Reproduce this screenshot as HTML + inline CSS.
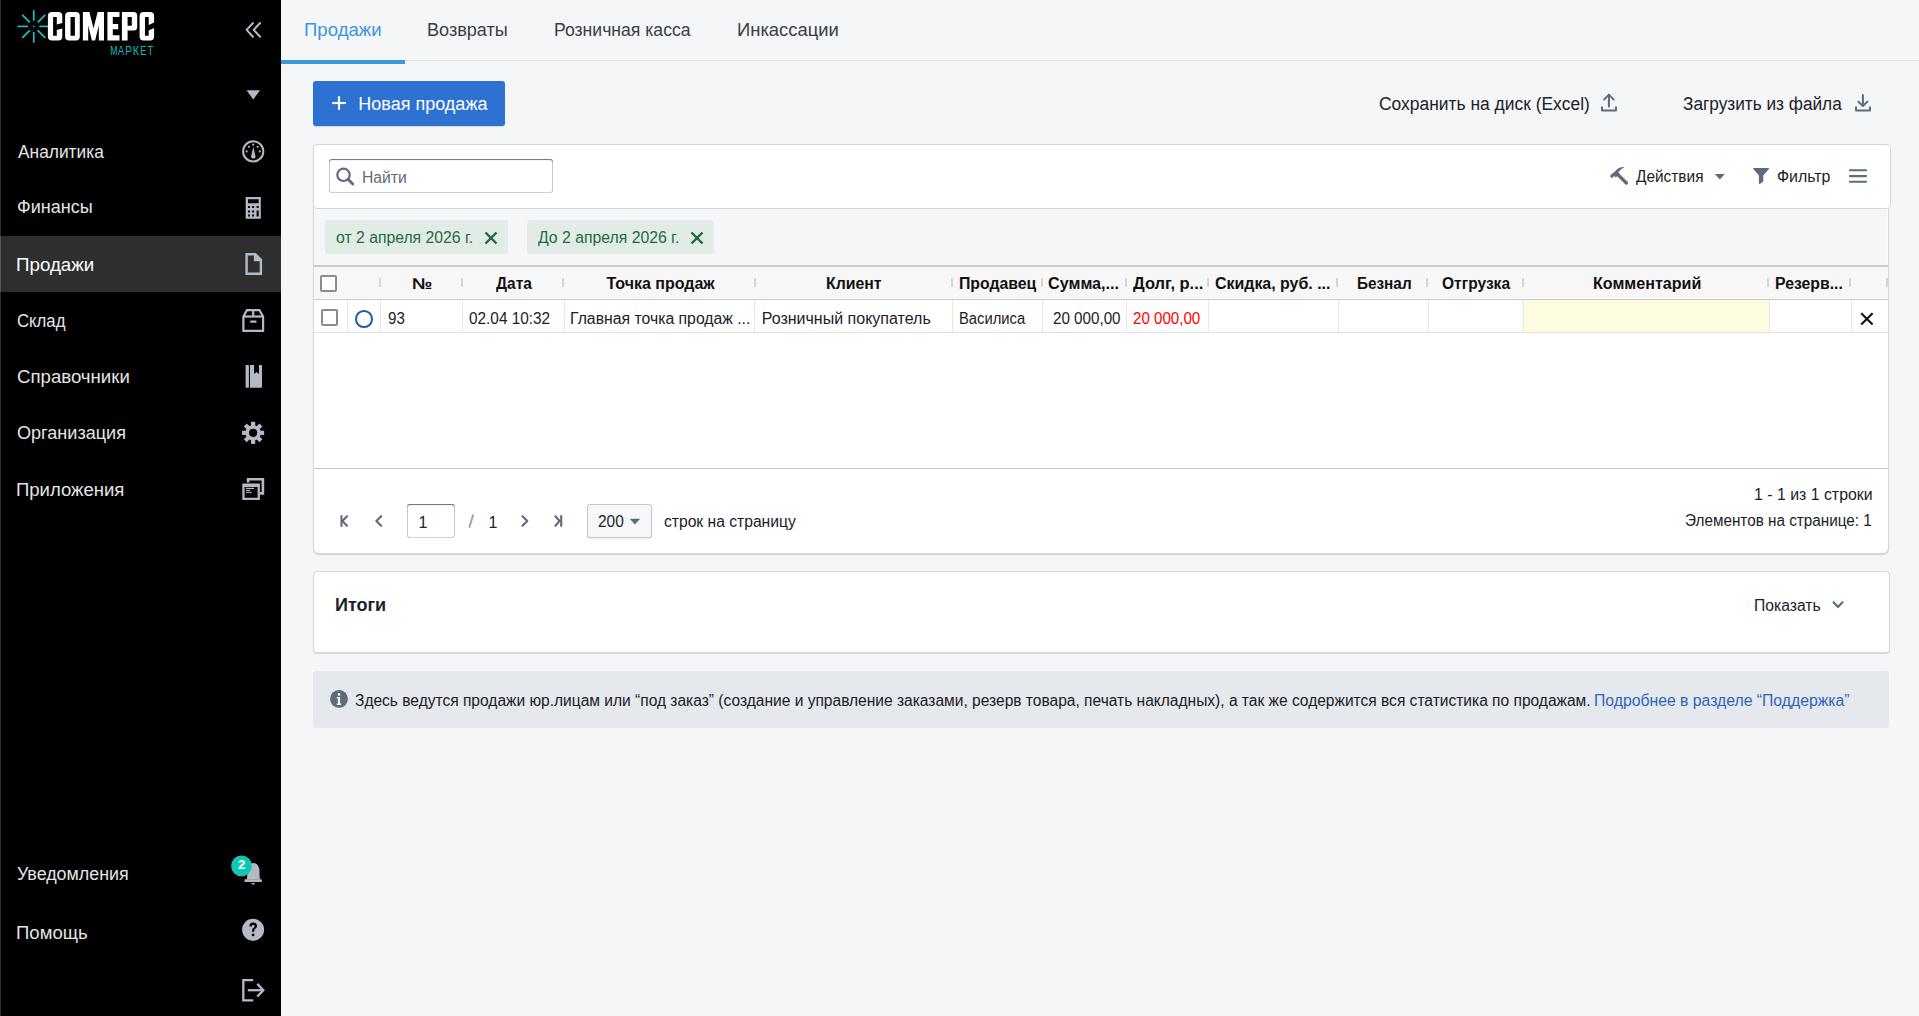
<!DOCTYPE html>
<html><head><meta charset="utf-8">
<style>
*{box-sizing:border-box;margin:0;padding:0}
html,body{width:1919px;height:1016px;overflow:hidden}
body{font-family:"Liberation Sans",sans-serif;background:#f5f6f8;color:#1c2127;position:relative}
.abs{position:absolute}
.t{position:absolute;white-space:nowrap;line-height:1}
</style></head><body>

<div class="abs" style="left:0px;top:0px;width:281px;height:1016px;background:#000"></div>
<div class="abs" style="left:0px;top:0px;width:1px;height:1016px;background:#2b2f2d"></div>
<div class="abs" style="left:1px;top:236px;width:280px;height:56px;background:#2e2e2e"></div>
<div class="abs" style="left:0px;top:236px;width:1px;height:56px;background:#555a57"></div>
<svg class="abs" style="left:0px;top:0px" width="60" height="60" viewBox="0 0 60 60"><g stroke="#1dc5c8" stroke-width="1.6" stroke-linecap="butt"><line x1="39.35" y1="26.40" x2="50.05" y2="26.40"/><line x1="37.71" y1="30.36" x2="45.28" y2="37.93"/><line x1="33.75" y1="32.00" x2="33.75" y2="42.70"/><line x1="29.79" y1="30.36" x2="22.22" y2="37.93"/><line x1="28.15" y1="26.40" x2="17.45" y2="26.40"/><line x1="29.79" y1="22.44" x2="22.22" y2="14.87"/><line x1="33.75" y1="20.80" x2="33.75" y2="10.10"/><line x1="37.71" y1="22.44" x2="45.28" y2="14.87"/></g><circle cx="33.75" cy="26.4" r="0.8" fill="#1dc5c8"/></svg>
<svg class="abs" style="left:40px;top:0px" width="130" height="64" viewBox="40 0 130 64"><g fill="#fff"><path d="M62.3,22.9 V16.1 Q62.3,12.1 58.3,12.1 H51.9 Q47.9,12.1 47.9,16.1 V36.6 Q47.9,40.6 51.9,40.6 H58.3 Q62.3,40.6 62.3,36.6 V28.4 L56.8,30.0 V35.8 H53.1 V16.9 H56.8 V24.6 Z"/><path fill-rule="evenodd" d="M69.1,12.1 H75.8 Q79.8,12.1 79.8,16.1 V36.6 Q79.8,40.6 75.8,40.6 H69.1 Q65.1,40.6 65.1,36.6 V16.1 Q65.1,12.1 69.1,12.1 Z M70.5,16.9 H74.9 V35.8 H70.5 Z"/><path d="M82.9,12.1 H89.4 L93.5,28.5 L97.6,12.1 H104 V40.6 H98.8 V25.4 L95.1,40.6 H91.9 L88.2,25.4 V40.6 H82.9 Z"/><path d="M107.4,12.1 H119.5 V17.1 H112.8 V24 H118.2 V29.2 H112.8 V35.3 H119.5 V40.6 H107.4 Z"/><path fill-rule="evenodd" d="M121.9,12.1 H133.7 Q137.2,12.1 137.2,15.6 V27.1 Q137.2,30.6 133.7,30.6 H127.6 V40.6 H121.9 Z M127.6,17.1 H131.8 V25.7 H127.6 Z"/><path d="M154.1,22.5 V16.1 Q154.1,12.1 150.1,12.1 H143.6 Q139.6,12.1 139.6,16.1 V36.6 Q139.6,40.6 143.6,40.6 H150.1 Q154.1,40.6 154.1,36.6 V27.9 L148.7,30.4 V35.8 H145 V17.1 H148.7 V25 Z"/></g></svg>
<svg class="abs" style="left:100px;top:40px" width="60" height="20" viewBox="100 40 60 20"><text transform="translate(110.20,55) scale(0.667,1)" font-family="Liberation Sans" font-size="13.2" fill="#15b8b9">М</text><text transform="translate(118.00,55) scale(0.695,1)" font-family="Liberation Sans" font-size="13.2" fill="#15b8b9">А</text><text transform="translate(125.29,55) scale(0.765,1)" font-family="Liberation Sans" font-size="13.2" fill="#15b8b9">Р</text><text transform="translate(132.63,55) scale(0.826,1)" font-family="Liberation Sans" font-size="13.2" fill="#15b8b9">К</text><text transform="translate(140.18,55) scale(0.681,1)" font-family="Liberation Sans" font-size="13.2" fill="#15b8b9">Е</text><text transform="translate(147.51,55) scale(0.731,1)" font-family="Liberation Sans" font-size="13.2" fill="#15b8b9">Т</text></svg>
<svg class="abs" style="left:240px;top:15px" width="30" height="30" viewBox="240 15 30 30"><g fill="none" stroke="#b3bac5" stroke-width="2" stroke-linecap="round" stroke-linejoin="round"><polyline points="253,23 246.6,29.9 253,36.8"/><polyline points="260.1,23 253.7,29.9 260.1,36.8"/></g></svg>
<svg class="abs" style="left:240px;top:85px" width="30" height="20" viewBox="240 85 30 20"><polygon points="246.5,90.2 260,90.2 253.25,99.6" fill="#b3bac5"/></svg>
<div class="t" style="left:17.50px;top:143px;font-size:18.3px;color:#e4e4e4;font-weight:400;transform:scaleX(0.9483);transform-origin:0 0;">Аналитика</div>
<div class="t" style="left:16.51px;top:198px;font-size:18.3px;color:#e4e4e4;font-weight:400;transform:scaleX(0.9856);transform-origin:0 0;">Финансы</div>
<div class="t" style="left:16.20px;top:256px;font-size:18.3px;color:#fff;font-weight:400;transform:scaleX(1.0251);transform-origin:0 0;">Продажи</div>
<div class="t" style="left:16.66px;top:312px;font-size:18.3px;color:#e4e4e4;font-weight:400;transform:scaleX(0.9149);transform-origin:0 0;">Склад</div>
<div class="t" style="left:16.57px;top:368px;font-size:18.3px;color:#e4e4e4;font-weight:400;transform:scaleX(1.0184);transform-origin:0 0;">Справочники</div>
<div class="t" style="left:16.69px;top:424px;font-size:18.3px;color:#e4e4e4;font-weight:400;transform:scaleX(0.9886);transform-origin:0 0;">Организация</div>
<div class="t" style="left:16.02px;top:481px;font-size:18.3px;color:#e4e4e4;font-weight:400;transform:scaleX(1.0134);transform-origin:0 0;">Приложения</div>
<div class="t" style="left:16.76px;top:865px;font-size:18.3px;color:#e4e4e4;font-weight:400;transform:scaleX(0.9775);transform-origin:0 0;">Уведомления</div>
<div class="t" style="left:15.82px;top:924px;font-size:18.3px;color:#e4e4e4;font-weight:400;transform:scaleX(1.0140);transform-origin:0 0;">Помощь</div>
<svg class="abs" style="left:238px;top:136px" width="30" height="30" viewBox="238 136 30 30"><circle cx="253.2" cy="151.4" r="10.1" fill="none" stroke="#b3bac5" stroke-width="2"/><g fill="#b3bac5"><circle cx="253.2" cy="144.6" r="1.05"/><circle cx="248.9" cy="146.8" r="1.05"/><circle cx="257.6" cy="146.8" r="1.05"/><circle cx="246.6" cy="151.4" r="1.05"/><circle cx="259.8" cy="151.4" r="1.05"/><path d="M253.3,146.8 L255.5,156.4 Q255.6,158.6 253.3,158.6 Q251,158.6 251.1,156.4 Z"/></g></svg>
<svg class="abs" style="left:238px;top:192px" width="30" height="32" viewBox="238 192 30 32"><path fill-rule="evenodd" fill="#b3bac5" d="M245.7,197 H260.8 V218.8 H245.7 Z M248,199.2 H258.7 V203.2 H248 Z M248,206 H250 V208 H248 Z M252.1,206 H254.1 V208 H252.1 Z M256.6,206 H258.7 V208 H256.6 Z M248,210.4 H250 V212.4 H248 Z M252.1,210.4 H254.1 V212.4 H252.1 Z M256.6,210.4 H258.7 V216.6 H256.6 Z M248,214.5 H250 V216.6 H248 Z M252.1,214.5 H254.1 V216.6 H252.1 Z"/></svg>
<svg class="abs" style="left:238px;top:248px" width="30" height="32" viewBox="238 248 30 32"><path fill-rule="evenodd" fill="#b3bac5" d="M245.4,253 H255.8 L262.1,259.3 V275 H245.4 Z M247.8,255.4 V272.6 H259.7 V261.2 H253.9 V255.4 Z"/></svg>
<svg class="abs" style="left:238px;top:304px" width="30" height="32" viewBox="238 304 30 32"><g fill="none" stroke="#b3bac5" stroke-width="2.2" stroke-linejoin="miter"><path d="M243.4,316.5 L247,310.1 H259.4 L263.1,316.5 V330.8 H243.4 Z"/><line x1="243.4" y1="316.5" x2="263.1" y2="316.5"/><line x1="253.2" y1="310.1" x2="253.2" y2="316.5"/></g><rect x="250.1" y="320.4" width="6.5" height="2.3" rx="0.8" fill="#b3bac5"/></svg>
<svg class="abs" style="left:238px;top:360px" width="30" height="32" viewBox="238 360 30 32"><g fill="#b3bac5"><rect x="245.6" y="365" width="3.3" height="22.7" rx="0.6"/><path d="M250,365 H254.1 V373.9 L256.55,372.1 L259,373.9 V365 H261.4 Q262,365 262,365.6 V387.1 Q262,387.7 261.4,387.7 H250 Z"/></g></svg>
<svg class="abs" style="left:238px;top:416px" width="30" height="32" viewBox="238 416 30 32"><g fill="#b3bac5"><rect x="251" y="421.8" width="4.2" height="5" transform="rotate(0 253.1 432.85)"/><rect x="251" y="421.8" width="4.2" height="5" transform="rotate(45 253.1 432.85)"/><rect x="251" y="421.8" width="4.2" height="5" transform="rotate(90 253.1 432.85)"/><rect x="251" y="421.8" width="4.2" height="5" transform="rotate(135 253.1 432.85)"/><rect x="251" y="421.8" width="4.2" height="5" transform="rotate(180 253.1 432.85)"/><rect x="251" y="421.8" width="4.2" height="5" transform="rotate(225 253.1 432.85)"/><rect x="251" y="421.8" width="4.2" height="5" transform="rotate(270 253.1 432.85)"/><rect x="251" y="421.8" width="4.2" height="5" transform="rotate(315 253.1 432.85)"/></g><circle cx="253.1" cy="432.85" r="5.9" fill="none" stroke="#b3bac5" stroke-width="3.6"/></svg>
<svg class="abs" style="left:238px;top:473px" width="30" height="32" viewBox="238 473 30 32"><path d="M248.1,482.5 V479.3 H262.9 V493.4 H260" fill="none" stroke="#b3bac5" stroke-width="2.6" stroke-linejoin="miter"/><path fill-rule="evenodd" fill="#b3bac5" d="M242.3,483.4 H259.9 V500.1 H242.3 Z M244.6,487 V497.8 H257.6 V487 Z"/><g fill="#b3bac5"><rect x="245.9" y="487.8" width="8.2" height="1.2"/><rect x="245.9" y="489.9" width="4.3" height="1.2"/><rect x="245.9" y="491.8" width="6" height="1.3" opacity=".8"/></g></svg>
<svg class="abs" style="left:238px;top:856px" width="30" height="34" viewBox="238 856 30 34"><g fill="#b3bac5"><path d="M246.6,879.6 C247.3,877.5 247.3,875 247.3,871.5 C247.3,866 249.8,863 253.2,863 C256.6,863 259.5,866 259.5,871.5 C259.5,875 259.5,877.5 260.3,879.6 Z"/><rect x="244.3" y="879.2" width="17.7" height="2.8" rx="1.3"/><path d="M251.2,883 H255.2 L253.2,885 Z"/></g></svg>
<svg class="abs" style="left:228px;top:852px" width="28" height="28" viewBox="228 852 28 28"><circle cx="241.5" cy="865.9" r="10.4" fill="#12c6b6"/></svg>
<div class="t" style="left:238.34px;top:859px;font-size:12.5px;color:#fff;font-weight:700;transform:scaleX(1.0500);transform-origin:0 0;">2</div>
<svg class="abs" style="left:238px;top:915px" width="30" height="30" viewBox="238 915 30 30"><circle cx="253.1" cy="929.8" r="11" fill="#b3bac5"/><path d="M249.4,926.3 Q249.4,922.6 253.2,922.6 Q257,922.6 257,926 Q257,928 255,929.1 Q254.2,929.6 254.2,931 V931.8 H252 V930.6 Q252,928.7 253.6,927.8 Q254.6,927.2 254.6,926.1 Q254.6,924.8 253.2,924.8 Q251.8,924.8 251.8,926.5 Z" fill="#000"/><circle cx="253.1" cy="934.9" r="1.35" fill="#000"/></svg>
<svg class="abs" style="left:238px;top:975px" width="32" height="31" viewBox="238 975 32 31"><g fill="none" stroke="#b3bac5" stroke-width="2.3"><path d="M253.2,980.1 H243.3 V1000.4 H253.2"/><line x1="247.8" y1="990.2" x2="263" y2="990.2"/><polyline points="257.3,983.9 263.3,990.2 257.3,996.5"/></g></svg>
<div class="abs" style="left:281px;top:60px;width:1638px;height:1px;background:#dfe2e6"></div>
<div class="abs" style="left:281px;top:60px;width:124px;height:4px;background:#3a9ad9"></div>
<div class="t" style="left:304.31px;top:21px;font-size:18.3px;color:#3a96dc;font-weight:400;transform:scaleX(1.0170);transform-origin:0 0;">Продажи</div>
<div class="t" style="left:427.05px;top:21px;font-size:18.3px;color:#383e45;font-weight:400;transform:scaleX(0.9892);transform-origin:0 0;">Возвраты</div>
<div class="t" style="left:553.69px;top:21px;font-size:18.3px;color:#383e45;font-weight:400;transform:scaleX(0.9626);transform-origin:0 0;">Розничная касса</div>
<div class="t" style="left:736.53px;top:21px;font-size:18.3px;color:#383e45;font-weight:400;transform:scaleX(1.0066);transform-origin:0 0;">Инкассации</div>
<div class="abs" style="left:313px;top:81px;width:192px;height:45px;background:#2d72d2;border-radius:3px;box-shadow:0 1px 1px rgba(17,20,24,.15)"></div>
<svg class="abs" style="left:328px;top:92px" width="22" height="22" viewBox="328 92 22 22"><g stroke="#fff" stroke-width="2.1"><line x1="339" y1="96.2" x2="339" y2="109.9"/><line x1="332.2" y1="103" x2="345.8" y2="103"/></g></svg>
<div class="t" style="left:358.36px;top:95px;font-size:18px;color:#fff;font-weight:400;">Новая продажа</div>
<div class="t" style="left:1378.93px;top:95px;font-size:18px;color:#1c2127;font-weight:400;transform:scaleX(0.9679);transform-origin:0 0;">Сохранить на диск (Excel)</div>
<svg class="abs" style="left:1595px;top:88px" width="30" height="30" viewBox="1595 88 30 30"><g fill="none" stroke="#5f6b7c" stroke-width="2" stroke-linecap="round" stroke-linejoin="round"><polyline points="1604.1,99.6 1608.9,94.6 1613.7,99.6"/><line x1="1608.9" y1="95.2" x2="1608.9" y2="106.6"/><polyline points="1602,107.2 1602,110.4 1616,110.4 1616,107.2"/></g></svg>
<div class="t" style="left:1683.30px;top:95px;font-size:18px;color:#1c2127;font-weight:400;transform:scaleX(0.9568);transform-origin:0 0;">Загрузить из файла</div>
<svg class="abs" style="left:1848px;top:88px" width="30" height="30" viewBox="1848 88 30 30"><g fill="none" stroke="#5f6b7c" stroke-width="2" stroke-linecap="round" stroke-linejoin="round"><polyline points="1858.3,101.6 1862.9,106 1867.5,101.6"/><line x1="1862.9" y1="94.9" x2="1862.9" y2="105.6"/><polyline points="1856,107.2 1856,110.4 1870,110.4 1870,107.2"/></g></svg>
<div class="abs" style="left:313px;top:144px;width:1576px;height:410px;background:#fff;border:1px solid #d5d8dc;border-radius:4px 4px 6px 6px;box-shadow:0 1px 1px rgba(17,20,24,.16)"></div>
<div class="abs" style="left:314px;top:208px;width:1573px;height:58px;background:#f5f6f8"></div>
<div class="abs" style="left:313px;top:144px;width:1578px;height:65px;background:#fff;border:1px solid #d3d6da;border-radius:4px"></div>
<div class="abs" style="left:329px;top:159px;width:224px;height:34px;background:#fff;border-radius:3px;box-shadow:inset 0 0 0 1px rgba(17,20,24,.2),inset 0 1px 1px rgba(17,20,24,.5)"></div>
<svg class="abs" style="left:333px;top:165px;" width="24" height="24" viewBox="0 0 24 24"><circle cx="10.5" cy="9.8" r="6.2" fill="none" stroke="#5f6b7c" stroke-width="2.2"/><line x1="15" y1="14.3" x2="19.8" y2="19" stroke="#5f6b7c" stroke-width="2.8" stroke-linecap="round"/></svg>
<div class="t" style="left:361.74px;top:170px;font-size:16px;color:#5f6b7c;font-weight:400;transform:scaleX(0.9820);transform-origin:0 0;">Найти</div>
<svg class="abs" style="left:1604px;top:160px" width="30" height="32" viewBox="1604 160 30 32"><g fill="#5f6b7c"><path d="M1610,176.2 L1611.8,178.3 L1614.2,176 L1615.8,177.4 L1619.6,173.6 L1618.2,172.2 L1621.5,169 Q1622.8,167.9 1624.3,167.6 L1624,167 Q1620.5,166.6 1618,168.6 L1612.4,173.8 L1611.9,173.4 Z"/></g><line x1="1617.6" y1="174.3" x2="1626.4" y2="183" stroke="#5f6b7c" stroke-width="3.3" stroke-linecap="round"/></svg>
<div class="t" style="left:1635.72px;top:169px;font-size:16px;color:#1c2127;font-weight:400;transform:scaleX(0.9629);transform-origin:0 0;">Действия</div>
<svg class="abs" style="left:1710px;top:168px" width="20" height="16" viewBox="1710 168 20 16"><polygon points="1714.8,173.9 1724.8,173.9 1719.8,179.5" fill="#5f6b7c"/></svg>
<svg class="abs" style="left:1748px;top:164px" width="26" height="24" viewBox="1748 164 26 24"><path d="M1753.6,168 H1768.6 Q1769.4,168.2 1768.9,169 L1763.3,175.6 V181.6 L1760.2,183.8 Q1758.9,184.3 1758.9,183 V175.6 L1753.3,169 Q1752.8,168.2 1753.6,168 Z" fill="#5f6b7c"/></svg>
<div class="t" style="left:1776.93px;top:169px;font-size:16px;color:#1c2127;font-weight:400;transform:scaleX(0.9935);transform-origin:0 0;">Фильтр</div>
<svg class="abs" style="left:1844px;top:164px" width="28" height="24" viewBox="1844 164 28 24"><g stroke="#5f6b7c" stroke-width="2.1" stroke-linecap="round"><line x1="1850" y1="170.3" x2="1866" y2="170.3"/><line x1="1850" y1="176.1" x2="1866" y2="176.1"/><line x1="1850" y1="181.8" x2="1866" y2="181.8"/></g></svg>
<div class="abs" style="left:325px;top:220px;width:183px;height:34px;background:#e2ebe6;border-radius:3px"></div>
<div class="t" style="left:336.37px;top:230px;font-size:16px;color:#1d6b42;font-weight:400;transform:scaleX(0.9840);transform-origin:0 0;">от 2 апреля 2026 г.</div>
<svg class="abs" style="left:482px;top:229px;" width="18" height="18" viewBox="0 0 18 18"><g stroke="#1d6b42" stroke-width="2.4"><line x1="3.5" y1="3.5" x2="14.5" y2="14.5"/><line x1="14.5" y1="3.5" x2="3.5" y2="14.5"/></g></svg>
<div class="abs" style="left:527px;top:220px;width:187px;height:34px;background:#e2ebe6;border-radius:3px"></div>
<div class="t" style="left:538.17px;top:230px;font-size:16px;color:#1d6b42;font-weight:400;transform:scaleX(0.9858);transform-origin:0 0;">До 2 апреля 2026 г.</div>
<svg class="abs" style="left:688px;top:229px;" width="18" height="18" viewBox="0 0 18 18"><g stroke="#1d6b42" stroke-width="2.4"><line x1="3.5" y1="3.5" x2="14.5" y2="14.5"/><line x1="14.5" y1="3.5" x2="3.5" y2="14.5"/></g></svg>
<div class="abs" style="left:314px;top:265px;width:1574px;height:2px;background:#c9cacc"></div>
<div class="abs" style="left:314px;top:267px;width:1574px;height:32px;background:#f7f7f7"></div>
<div class="abs" style="left:314px;top:299px;width:1574px;height:1px;background:#c8cacd"></div>
<div class="abs" style="left:379px;top:278px;width:2px;height:9px;background:#d6d6d6"></div>
<div class="abs" style="left:461px;top:278px;width:2px;height:9px;background:#d6d6d6"></div>
<div class="abs" style="left:562px;top:278px;width:2px;height:9px;background:#d6d6d6"></div>
<div class="abs" style="left:754px;top:278px;width:2px;height:9px;background:#d6d6d6"></div>
<div class="abs" style="left:951px;top:278px;width:2px;height:9px;background:#d6d6d6"></div>
<div class="abs" style="left:1041px;top:278px;width:2px;height:9px;background:#d6d6d6"></div>
<div class="abs" style="left:1125px;top:278px;width:2px;height:9px;background:#d6d6d6"></div>
<div class="abs" style="left:1207px;top:278px;width:2px;height:9px;background:#d6d6d6"></div>
<div class="abs" style="left:1336px;top:278px;width:2px;height:9px;background:#d6d6d6"></div>
<div class="abs" style="left:1426px;top:278px;width:2px;height:9px;background:#d6d6d6"></div>
<div class="abs" style="left:1522px;top:278px;width:2px;height:9px;background:#d6d6d6"></div>
<div class="abs" style="left:1767px;top:278px;width:2px;height:9px;background:#d6d6d6"></div>
<div class="abs" style="left:1849px;top:278px;width:2px;height:9px;background:#d6d6d6"></div>
<div class="abs" style="left:1886px;top:278px;width:2px;height:9px;background:#d6d6d6"></div>
<div class="abs" style="left:320px;top:275px;width:17px;height:17px;border:2px solid #8c8c8c;border-radius:2px;background:#fff"></div>
<div class="t" style="left:412.32px;top:276px;font-size:16px;color:#111;font-weight:700;transform:scaleX(1.1375);transform-origin:0 0;">№</div>
<div class="t" style="left:495.64px;top:276px;font-size:16px;color:#111;font-weight:700;transform:scaleX(0.9692);transform-origin:0 0;">Дата</div>
<div class="t" style="left:606.54px;top:276px;font-size:16px;color:#111;font-weight:700;">Точка продаж</div>
<div class="t" style="left:826.47px;top:276px;font-size:16px;color:#111;font-weight:700;transform:scaleX(0.9905);transform-origin:0 0;">Клиент</div>
<div class="t" style="left:958.67px;top:276px;font-size:16px;color:#111;font-weight:700;transform:scaleX(0.9878);transform-origin:0 0;">Продавец</div>
<div class="t" style="left:1048.05px;top:276px;font-size:16px;color:#111;font-weight:700;transform:scaleX(1.0096);transform-origin:0 0;">Сумма,...</div>
<div class="t" style="left:1132.84px;top:276px;font-size:16px;color:#111;font-weight:700;transform:scaleX(1.0280);transform-origin:0 0;">Долг, р...</div>
<div class="t" style="left:1214.66px;top:276px;font-size:16px;color:#111;font-weight:700;transform:scaleX(0.9960);transform-origin:0 0;">Скидка, руб. ...</div>
<div class="t" style="left:1356.51px;top:276px;font-size:16px;color:#111;font-weight:700;transform:scaleX(0.9566);transform-origin:0 0;">Безнал</div>
<div class="t" style="left:1441.88px;top:276px;font-size:16px;color:#111;font-weight:700;transform:scaleX(0.9709);transform-origin:0 0;">Отгрузка</div>
<div class="t" style="left:1592.70px;top:276px;font-size:16px;color:#111;font-weight:700;transform:scaleX(1.0062);transform-origin:0 0;">Комментарий</div>
<div class="t" style="left:1774.97px;top:276px;font-size:16px;color:#111;font-weight:700;transform:scaleX(0.9859);transform-origin:0 0;">Резерв...</div>
<div class="abs" style="left:314px;top:300px;width:1574px;height:32px;background:#fff"></div>
<div class="abs" style="left:1524px;top:300px;width:245px;height:32px;background:#fefcde"></div>
<div class="abs" style="left:314px;top:332px;width:1574px;height:1px;background:#dde1e6"></div>
<div class="abs" style="left:347px;top:300px;width:1px;height:32px;background:#e6e6e6"></div>
<div class="abs" style="left:380px;top:300px;width:1px;height:32px;background:#e6e6e6"></div>
<div class="abs" style="left:462px;top:300px;width:1px;height:32px;background:#e6e6e6"></div>
<div class="abs" style="left:564px;top:300px;width:1px;height:32px;background:#e6e6e6"></div>
<div class="abs" style="left:754px;top:300px;width:1px;height:32px;background:#e6e6e6"></div>
<div class="abs" style="left:952px;top:300px;width:1px;height:32px;background:#e6e6e6"></div>
<div class="abs" style="left:1042px;top:300px;width:1px;height:32px;background:#e6e6e6"></div>
<div class="abs" style="left:1126px;top:300px;width:1px;height:32px;background:#e6e6e6"></div>
<div class="abs" style="left:1208px;top:300px;width:1px;height:32px;background:#e6e6e6"></div>
<div class="abs" style="left:1338px;top:300px;width:1px;height:32px;background:#e6e6e6"></div>
<div class="abs" style="left:1428px;top:300px;width:1px;height:32px;background:#e6e6e6"></div>
<div class="abs" style="left:1523px;top:300px;width:1px;height:32px;background:#e6e6e6"></div>
<div class="abs" style="left:1769px;top:300px;width:1px;height:32px;background:#e6e6e6"></div>
<div class="abs" style="left:1851px;top:300px;width:1px;height:32px;background:#e6e6e6"></div>
<div class="abs" style="left:321px;top:309px;width:17px;height:17px;border:2px solid #8c8c8c;border-radius:2px;background:#fff"></div>
<div class="abs" style="left:355px;top:310px;width:17.5px;height:17.5px;border:2px solid #2159b5;border-radius:50%"></div>
<div class="t" style="left:387.62px;top:311px;font-size:16px;color:#1c2127;font-weight:400;transform:scaleX(0.9451);transform-origin:0 0;">93</div>
<div class="t" style="left:469.09px;top:311px;font-size:16px;color:#1c2127;font-weight:400;transform:scaleX(0.9598);transform-origin:0 0;">02.04 10:32</div>
<div class="t" style="left:570.04px;top:311px;font-size:16px;color:#1c2127;font-weight:400;transform:scaleX(0.9863);transform-origin:0 0;">Главная точка продаж ...</div>
<div class="t" style="left:761.72px;top:311px;font-size:16px;color:#1c2127;font-weight:400;">Розничный покупатель</div>
<div class="t" style="left:958.82px;top:311px;font-size:16px;color:#1c2127;font-weight:400;transform:scaleX(0.9233);transform-origin:0 0;">Василиса</div>
<div class="t" style="left:1052.94px;top:311px;font-size:16px;color:#1c2127;font-weight:400;transform:scaleX(0.9493);transform-origin:0 0;">20 000,00</div>
<div class="t" style="left:1133.24px;top:311px;font-size:16px;color:#f00;font-weight:400;transform:scaleX(0.9450);transform-origin:0 0;">20 000,00</div>
<svg class="abs" style="left:1856px;top:308px" width="22" height="22" viewBox="1856 308 22 22"><g stroke="#111" stroke-width="2.1"><line x1="1861.2" y1="313.2" x2="1872.6" y2="324.4"/><line x1="1872.6" y1="313.2" x2="1861.2" y2="324.4"/></g></svg>
<div class="abs" style="left:314px;top:468px;width:1574px;height:1px;background:#c5c9ce"></div>
<svg class="abs" style="left:334px;top:508px" width="56" height="26" viewBox="334 508 56 26"><g fill="none" stroke="#5f6b7c" stroke-width="2.1" stroke-linecap="round" stroke-linejoin="round"><line x1="341.5" y1="516.1" x2="341.5" y2="525.9"/><polyline points="347,516.2 342.4,521 347,525.8"/><polyline points="381.2,516.2 376.3,521 381.2,525.8"/></g></svg>
<div class="abs" style="left:407px;top:504px;width:48px;height:34px;background:#fff;border-radius:3px;box-shadow:inset 0 0 0 1px rgba(17,20,24,.2),inset 0 1px 1px rgba(17,20,24,.5)"></div>
<div class="t" style="left:418.60px;top:515px;font-size:16px;color:#1c2127;font-weight:400;">1</div>
<svg class="abs" style="left:462px;top:510px" width="18" height="22" viewBox="462 510 18 22"><line x1="473" y1="515.2" x2="469.5" y2="527" stroke="#9aa3b0" stroke-width="1.9" stroke-linecap="round"/></svg>
<div class="t" style="left:488.60px;top:515px;font-size:16px;color:#1c2127;font-weight:400;">1</div>
<svg class="abs" style="left:508px;top:508px" width="64" height="26" viewBox="508 508 64 26"><g fill="none" stroke="#5f6b7c" stroke-width="2.1" stroke-linecap="round" stroke-linejoin="round"><polyline points="522.5,516.2 527.3,521 522.5,525.8"/><polyline points="555.4,516.2 559.6,521 555.4,525.8"/><line x1="561.2" y1="516.1" x2="561.2" y2="525.9"/></g></svg>
<div class="abs" style="left:587px;top:504px;width:65px;height:34px;background:#f6f7f9;border-radius:3px;box-shadow:inset 0 0 0 1px rgba(17,20,24,.2),0 1px 2px rgba(17,20,24,.1)"></div>
<div class="t" style="left:597.73px;top:514px;font-size:16px;color:#1c2127;font-weight:400;transform:scaleX(0.9652);transform-origin:0 0;">200</div>
<svg class="abs" style="left:626px;top:512px" width="18" height="18" viewBox="626 512 18 18"><polygon points="630.2,519 639.6,519 634.9,524.3" fill="#5f6b7c" stroke="#5f6b7c" stroke-width="0.5" stroke-linejoin="round"/></svg>
<div class="t" style="left:663.57px;top:514px;font-size:16px;color:#1c2127;font-weight:400;transform:scaleX(0.9772);transform-origin:0 0;">строк на страницу</div>
<div class="t" style="left:1754.41px;top:487px;font-size:16px;color:#1c2127;font-weight:400;transform:scaleX(0.9916);transform-origin:0 0;">1 - 1 из 1 строки</div>
<div class="t" style="left:1684.84px;top:513px;font-size:16px;color:#1c2127;font-weight:400;transform:scaleX(0.9549);transform-origin:0 0;">Элементов на странице: 1</div>
<div class="abs" style="left:313px;top:571px;width:1577px;height:82px;background:#fff;border:1px solid #d5d8dc;border-radius:4px;box-shadow:0 1px 1px rgba(17,20,24,.14)"></div>
<div class="t" style="left:334.83px;top:596px;font-size:18.5px;color:#1c2127;font-weight:700;transform:scaleX(0.9752);transform-origin:0 0;">Итоги</div>
<div class="t" style="left:1754.34px;top:598px;font-size:16px;color:#1c2127;font-weight:400;transform:scaleX(0.9806);transform-origin:0 0;">Показать</div>
<svg class="abs" style="left:1826px;top:594px" width="24" height="22" viewBox="1826 594 24 22"><polyline points="1833.5,602.3 1838,606.9 1842.5,602.3" fill="none" stroke="#5f6b7c" stroke-width="2.1" stroke-linecap="round" stroke-linejoin="round"/></svg>
<div class="abs" style="left:313px;top:671px;width:1576px;height:57px;background:#e5e8ec;border-radius:3px"></div>
<svg class="abs" style="left:326px;top:686px" width="26" height="26" viewBox="326 686 26 26"><circle cx="339" cy="698.9" r="8.95" fill="#5f6b7c"/><g fill="#eef0f3"><rect x="337.9" y="693.1" width="2.2" height="2.6"/><path d="M336.7,697 H340.1 V703.6 H341.2 V705 H336.7 V703.6 H337.9 V698.4 H336.7 Z"/></g></svg>
<div class="t" style="left:355.26px;top:693px;font-size:16px;color:#1c2127;font-weight:400;transform:scaleX(0.9713);transform-origin:0 0;">Здесь ведутся продажи юр.лицам или “под заказ” (создание и управление заказами, резерв товара, печать накладных), а так же содержится вся статистика по продажам.</div>
<div class="t" style="left:1594.34px;top:693px;font-size:16px;color:#2d65b8;font-weight:400;transform:scaleX(0.9845);transform-origin:0 0;">Подробнее в разделе “Поддержка”</div>
</body></html>
